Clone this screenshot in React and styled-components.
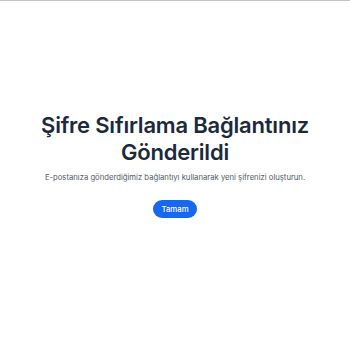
import React from "react";
import styled, { createGlobalStyle } from "styled-components";

const Global = createGlobalStyle`
  html, body { margin: 0; padding: 0; background: #ffffff; }
  body { font-family: Inter, "Noto Sans", sans-serif; }
`;

const Page = styled.div`
  width: 350px;
  height: 350px;
  box-sizing: border-box;
  border-top: 1px solid #c4c4c4;
  display: flex;
  flex-direction: column;
  align-items: center;
  padding-top: 111px;
`;

const Title = styled.h1`
  margin: 0;
  font-family: Inter, sans-serif;
  font-size: 22px;
  font-weight: 600;
  line-height: 27px;
  letter-spacing: -0.2px;
  color: #1b2a3b;
  text-align: center;
  width: 290px;
`;

const Subtitle = styled.p`
  margin: 6px 0 0;
  font-family: Inter, sans-serif;
  font-size: 7.7px;
  line-height: 12px;
  color: #4f5965;
  text-align: center;
`;

const Button = styled.button`
  margin-top: 16px;
  height: 18px;
  padding: 0 8px;
  border: none;
  border-radius: 9px;
  background: #1668f0;
  color: #ffffff;
  font-family: Inter, sans-serif;
  font-size: 7.8px;
  font-weight: 500;
  cursor: pointer;
`;

export default function App() {
  return (
    <>
      <Global />
      <Page>
        <Title>Şifre Sıfırlama Bağlantınız Gönderildi</Title>
        <Subtitle>
          E-postanıza gönderdiğimiz bağlantıyı kullanarak yeni şifrenizi oluşturun.
        </Subtitle>
        <Button>Tamam</Button>
      </Page>
    </>
  );
}
